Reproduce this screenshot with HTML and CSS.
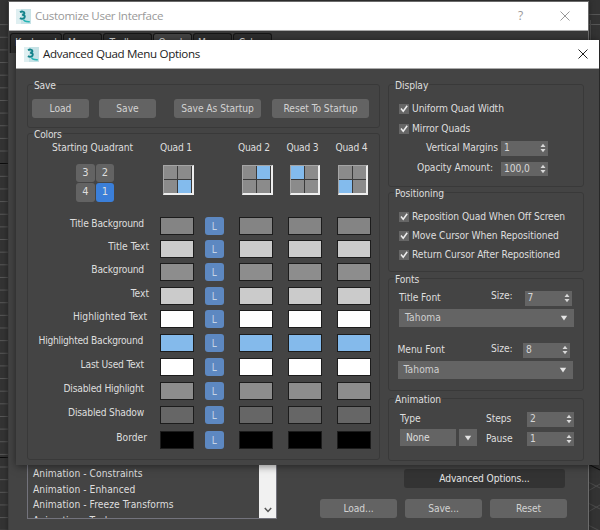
FILE: index.html
```html
<!DOCTYPE html>
<html lang="en">
<head>
<meta charset="utf-8">
<title>Advanced Quad Menu Options</title>
<link rel="stylesheet" href="styles.css">
</head>
<body>
<svg width="0" height="0" class="defs">
  <symbol id="logo" viewBox="0 0 15 15">
    <rect width="15" height="15" fill="#c6e2e6"/>
    <path d="M0 0h5v15H0z" fill="#dfeff1"/>
    <path d="M4 3.200c1.500-1 4.400-.9 4.400.9 0 1.300-1.200 1.700-2.300 1.700 1.400 0 2.700.5 2.700 2 0 2-3 2.500-4.900 1.300" fill="none" stroke="#12828a" stroke-width="1.900"/>
    <path d="M7.600 10.400c.4 2.200 2.400 2.500 6.200 2.300" fill="none" stroke="#25b5b5" stroke-width="1.600"/>
  </symbol>
  <symbol id="close" viewBox="0 0 10 10"><path d="M.5.5l9 9M9.500.5l-9 9" fill="none" stroke="currentColor"/></symbol>
  <symbol id="check" viewBox="0 0 10 10"><path d="M2 4.600l2.200 2.600L8.200 1.800" fill="none" stroke="#eee" stroke-width="1.500"/></symbol>
  <symbol id="updown" viewBox="0 0 6 10"><path d="M.5 4L3 .8 5.500 4zM.5 6L3 9.200 5.500 6z" fill="#d8d8d8"/></symbol>
  <symbol id="down" viewBox="0 0 8 6"><path d="M.8.8h6.400L4 5.400z" fill="#e4e4e4"/></symbol>
</svg>

<svg class="desktop" viewBox="0 0 600 530">
  <defs>
    <pattern id="rules" width="9" height="12.640" patternUnits="userSpaceOnUse" y="11.500"><path d="M0 .5h9" stroke="#575757"/></pattern>
  </defs>
  <rect width="600" height="530" fill="#333"/>
  <rect y="14" width="8" height="516" fill="url(#rules)"/>
  <path d="M0 163.500h8M0 457.500h8" stroke="#0c0c0c"/>
  <path d="M588 14.500h12M588 24.500h12M590.500 20v20" stroke="#555"/>
  <path d="M588 464l12 6" stroke="#080808"/>
  <path d="M588 482l12 6M588 491l12-7M588 503l12 6M588 512l12-7M588 525l12 6" stroke="#4c4c4c"/>
</svg>

<section class="window parent">
  <header class="bar"><svg class="logo"><use href="#logo"/></svg><h1>Customize User Interface</h1><span class="help">?</span><svg class="x"><use href="#close"/></svg></header>
  <nav class="tabs"><span>Keyboard</span><span>Menus</span><span>Toolbars</span><span class="on">Quads</span><span>Menus</span><span>Colors</span></nav>
  <div class="lower">
    <div class="list">
      <ul><li>Animation - Constraints</li><li>Animation - Enhanced</li><li>Animation - Freeze Transforms</li><li>Animation - Tools</li></ul>
      <div class="scroll"><svg viewBox="0 0 8 6"><path d="M.8 1L4 4.500 7.200 1" fill="none" stroke="#555" stroke-width="1.500"/></svg></div>
    </div>
    <div class="actions">
      <button class="btn adv">Advanced Options...</button>
      <div class="trio"><button class="btn">Load...</button><button class="btn">Save...</button><button class="btn">Reset</button></div>
    </div>
  </div>
</section>

<section class="window dialog">
  <header class="bar"><svg class="logo"><use href="#logo"/></svg><h1>Advanced Quad Menu Options</h1><svg class="x"><use href="#close"/></svg></header>
  <div class="body">
    <div class="left">
      <div class="group save"><h2>Save</h2>
        <div class="saverow"><button class="btn">Load</button><button class="btn">Save</button><button class="btn wide">Save As Startup</button><button class="btn wider">Reset To Startup</button></div>
      </div>
      <div class="group colors"><h2>Colors</h2>
        <div class="cols heads"><span class="start">Starting Quadrant</span><span>Quad 1</span><span></span><span>Quad 2</span><span>Quad 3</span><span>Quad 4</span></div>
        <div class="cols icons">
          <div class="pad"><button>3</button><button>2</button><button>4</button><button class="on">1</button></div>
          <div class="quad"><i></i><i></i><i></i><i class="hot"></i></div><span></span>
          <div class="quad q2"><i></i><i class="hot"></i><i></i><i></i></div>
          <div class="quad q3"><i class="hot"></i><i></i><i></i><i></i></div>
          <div class="quad q4"><i></i><i></i><i class="hot"></i><i></i></div>
        </div>
        <div class="rows">
          <div class="cols title-bg"><label>Title Background</label><b></b><button>L</button><b></b><b></b><b></b></div>
          <div class="cols title-text"><label>Title Text</label><b></b><button>L</button><b></b><b></b><b></b></div>
          <div class="cols bg"><label>Background</label><b></b><button>L</button><b></b><b></b><b></b></div>
          <div class="cols text"><label>Text</label><b></b><button>L</button><b></b><b></b><b></b></div>
          <div class="cols hi-text"><label>Highlighted Text</label><b></b><button>L</button><b></b><b></b><b></b></div>
          <div class="cols hi-bg"><label>Highlighted Background</label><b></b><button>L</button><b></b><b></b><b></b></div>
          <div class="cols last"><label>Last Used Text</label><b></b><button>L</button><b></b><b></b><b></b></div>
          <div class="cols dis-hi"><label>Disabled Highlight</label><b></b><button>L</button><b></b><b></b><b></b></div>
          <div class="cols dis-sh"><label>Disabled Shadow</label><b></b><button>L</button><b></b><b></b><b></b></div>
          <div class="cols edge"><label>Border</label><b></b><button>L</button><b></b><b></b><b></b></div>
        </div>
      </div>
    </div>
    <div class="right">
      <div class="group display"><h2>Display</h2>
        <div class="check"><svg><use href="#check"/></svg>Uniform Quad Width</div>
        <div class="check"><svg><use href="#check"/></svg>Mirror Quads</div>
        <div class="field vm"><span>Vertical Margins</span><div class="spin">1<svg><use href="#updown"/></svg></div></div>
        <div class="field oa"><span>Opacity Amount:</span><div class="spin">100,0<svg><use href="#updown"/></svg></div></div>
      </div>
      <div class="group positioning"><h2>Positioning</h2>
        <div class="check"><svg><use href="#check"/></svg>Reposition Quad When Off Screen</div>
        <div class="check"><svg><use href="#check"/></svg>Move Cursor When Repositioned</div>
        <div class="check"><svg><use href="#check"/></svg>Return Cursor After Repositioned</div>
      </div>
      <div class="group fonts"><h2>Fonts</h2>
        <div class="font">
          <div class="fontrow"><span class="name">Title Font</span><span class="size">Size:</span><div class="spin">7<svg><use href="#updown"/></svg></div></div>
          <div class="combo">Tahoma<svg><use href="#down"/></svg></div>
        </div>
        <div class="font menu">
          <div class="fontrow"><span class="name">Menu Font</span><span class="size">Size:</span><div class="spin">8<svg><use href="#updown"/></svg></div></div>
          <div class="combo">Tahoma<svg><use href="#down"/></svg></div>
        </div>
      </div>
      <div class="group animation"><h2>Animation</h2>
        <div class="anim">
          <div class="type"><span>Type</span><div class="split"><span>None</span><em><svg><use href="#down"/></svg></em></div></div>
          <div class="nums">
            <span>Steps</span><div class="spin">2<svg><use href="#updown"/></svg></div>
            <span>Pause</span><div class="spin">1<svg><use href="#updown"/></svg></div>
          </div>
        </div>
      </div>
    </div>
  </div>
</section>
</body>
</html>
```
FILE: styles.css
```css
* { box-sizing: border-box; }
body {
  margin: 0; width: 600px; height: 530px; overflow: hidden; position: relative;
  background: #333; color: #dedede;
  font: 10.2px/14px "DejaVu Sans Condensed", "DejaVu Sans", sans-serif;
  font-stretch: condensed; letter-spacing: -0.2px; white-space: nowrap;
}
h1, h2, ul { margin: 0; padding: 0; font-weight: normal; }
button { font: inherit; letter-spacing: inherit; color: inherit; border: 0; padding: 0; }
svg { display: block; }
.defs { position: absolute; }
.desktop { position: absolute; left: 0; top: 0; width: 600px; height: 530px; }

.window { position: absolute; background: #444; }
.parent { left: 8px; top: 1px; width: 581px; height: 540px; border: 1px solid #6b6b6b; border-left-color: #3d3d3d; border-bottom: 0; box-shadow: 0 0 5px #222; }
.dialog { left: 16px; top: 40px; width: 583px; height: 425px; box-shadow: 0 1px 8px rgba(0, 0, 0, .5); }
.bar { display: flex; align-items: center; background: #fff; height: 29px; padding: 0 16px 0 8px; border-bottom: 1px solid #aaa; }
.dialog .bar { color: #222; padding-right: 11px; }
.parent .bar { color: #999; padding-left: 7px; padding-right: 18px; }
.bar h1 { flex: 1; font: 11.6px/18px "Open Sans", "Noto Sans", sans-serif; letter-spacing: -.33px; margin-left: 4px; }
.logo { width: 15px; height: 15px; }
.x { width: 10px; height: 10px; }
.help { font: 12px/18px "Open Sans", sans-serif; margin-right: 37px; }

.tabs { display: flex; gap: 1px; padding: 2px 0 0 1px; height: 22px; background: #383838; }
.tabs span { background: #2e2e2e; border: 1px solid #151515; border-bottom: 0; border-radius: 3px 3px 0 0; text-align: center; height: 20px; line-height: 17px; width: 39px; }
.tabs span:nth-child(1) { width: 52px; }
.tabs span:nth-child(3) { width: 49px; }
.tabs .on { background: #444; }
.lower { display: flex; padding: 407px 21px 0 18px; justify-content: space-between; }
.list { display: flex; width: 250px; height: 59px; border: 1px solid #73737c; overflow: hidden; letter-spacing: .06px; }
.list ul { flex: 1; list-style: none; padding: 5px 0 0 5px; }
.list li { height: 15.700px; line-height: 16px; }
.scroll { width: 17px; background: #f1f1f1; display: flex; align-items: flex-end; justify-content: center; padding-bottom: 5px; }
.scroll svg { width: 8px; height: 6px; }
.actions { padding-top: 9px; letter-spacing: -.1px; }
.btn { background: #636363; height: 19px; border-radius: 3px; text-align: center; line-height: 18px; color: #d2d2d2; }
.adv { display: block; width: 161px; margin-left: 84px; background: #333; color: #e4e4e4; }
.trio { display: flex; gap: 8px; margin-top: 11px; }
.trio .btn { width: 77px; }

.body { display: flex; justify-content: space-between; padding: 15px 15px 0 11px; }
.left { width: 353px; }
.right { width: 196px; letter-spacing: -.08px; }
.group { border: 1px solid #393939; border-radius: 3px; }
.group h2 { font-size: inherit; line-height: 14px; margin: -6px 0 0 5px; padding: 0 1px; width: fit-content; background: #444; }
.save { height: 44px; margin-bottom: 5px; }
.saverow { display: flex; gap: 10px; padding: 6px 0 0 4px; letter-spacing: -.05px; }
.saverow .btn { width: 57px; }
.saverow .wide { width: 87px; margin-left: 8px; }
.saverow .wider { width: 97px; margin-left: 1px; }
.colors { height: 327px; }
.group.colors h2 { margin-bottom: -1px; }
.cols { display: grid; grid-template-columns: 132px 45px 34px 48.500px 49px 34px; }
.heads { height: 24px; line-height: 14px; }
.heads .start { padding-left: 24px; letter-spacing: -.1px; }
.heads span:nth-child(n+4) { margin-left: -1px; }
.pad { display: grid; grid-template-columns: 18.500px 18.500px; grid-auto-rows: 18.500px; gap: 1px; padding: 0 0 0 48px; margin-top: -1.500px; }
.pad button { background: #636363; border-radius: 3px; font-size: 11px; }
.pad .on { background: #3b7fd9; }
.icons { height: 52px; }
.quad { display: grid; grid-template-columns: 13px 13px; grid-template-rows: 13px 12.500px; gap: 1px; background: #3a3a3a; width: 30.500px; height: 30px; margin: 0 0 0 3px; border: 1.500px solid #a5a5a5; border-right: 2px solid #eee; border-bottom: 2px solid #eee; }
.quad.q3 { margin-left: 2px; }
.quad.q4 { margin-left: 1px; }
.quad i { background: #8b8b8b; }
.quad .hot { background: #83bbed; }
.rows { display: grid; grid-template-rows: 23px 23px 24px 23px 24px 24px 24px 24px 25px 18px; }
.rows .cols { height: 18px; }
.rows label { text-align: right; line-height: 13px; padding-right: 16px; }
.rows button { width: 18.500px; height: 18px; border-radius: 3px; background: #5d88c1; color: #c5d4e6; line-height: 20px; font-size: 10px; }
.rows b { width: 34px; height: 18px; border: 1px solid #1c1c1c; background: #848484; }
.rows .title-text label, .rows .text label { padding-right: 11px; letter-spacing: 0; }
.rows .hi-text label, .rows .edge label { padding-right: 13px; letter-spacing: 0; }
.rows .hi-bg label { padding-right: 17px; letter-spacing: -.27px; }
.title-text b, .text b { background: #cbcbcb; }
.bg b, .dis-hi b { background: #8d8d8d; }
.hi-text b, .last b { background: #fff; }
.hi-bg b { background: #84baeb; }
.dis-sh b { background: #666; }
.edge b { background: #000; }

.check { display: flex; align-items: center; gap: 3px; height: 20px; padding-left: 10px; }
.check svg { width: 10px; height: 10px; background: #666; }
.spin { display: flex; align-items: center; justify-content: space-between; width: 47px; height: 14.500px; background: #646464; padding: 0 2px 0 3px; color: #d6d6d6; }
.spin svg { width: 6px; height: 10px; }
.field { display: flex; }
.display { height: 103px; margin-bottom: 5px; }
.display h2 + .check { margin-top: 6px; }
.vm { padding-left: 37px; margin-top: 2px; }
.vm span { width: 75px; }
.oa { padding-left: 28px; margin-top: 6px; }
.oa span { width: 84px; line-height: 12px; }
.positioning { height: 80px; margin-bottom: 6px; }
.positioning .check { height: 19.300px; }
.positioning h2 + .check { margin-top: 6px; }
.fonts { height: 113px; margin-bottom: 7px; }
.font { padding: 4px 0 0 10px; }
.font.menu { padding: 16.500px 0 0 8.500px; }
.fontrow { display: flex; height: 18px; }
.name { width: 92px; line-height: 13px; }
.menu .name { width: 93.500px; }
.size { width: 33.500px; line-height: 10px; }
.menu .size { width: 32px; line-height: 11px; }
.combo { display: flex; align-items: center; justify-content: space-between; width: 175px; height: 17.500px; background: #646464; color: #cfcfcf; padding: 0 6px; letter-spacing: .1px; }
.combo svg, .split svg { width: 8px; height: 6px; }
.animation { height: 63px; }
.anim { display: flex; padding: 5px 0 0 11px; }
.type { width: 86px; }
.split { display: flex; width: 77px; height: 17px; margin-top: 3px; background: #646464; }
.split > span { width: 56px; padding-left: 6px; line-height: 18px; }
.split em { flex: 1; border-left: 3.500px solid #444; display: flex; align-items: center; justify-content: center; }
.nums { display: grid; grid-template-columns: 41px 47px; row-gap: 5px; }
```
